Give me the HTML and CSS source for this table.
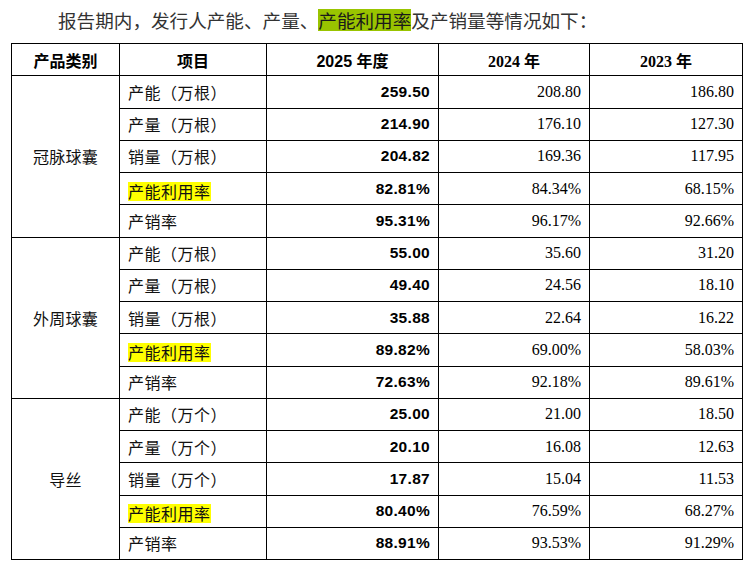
FILE: index.html
```html
<!DOCTYPE html>
<html lang="zh-CN">
<head>
<meta charset="utf-8">
<link rel="stylesheet" href="styles.css">
</head>
<body>
<p class="intro">报告期内，发行人产能、产量、<span class="hl-green">产能利用率</span>及产销量等情况如下：</p>
<table class="data">
  <colgroup>
    <col class="c1"><col class="c2"><col class="c3"><col class="c4"><col class="c5">
  </colgroup>
  <thead>
    <tr>
      <th class="h-sans">产品类别</th>
      <th class="h-sans">项目</th>
      <th class="h-sans">2025 年度</th>
      <th class="h-serif">2024 年</th>
      <th class="h-serif">2023 年</th>
    </tr>
  </thead>
  <tbody>
    <tr><td class="cat" rowspan="5">冠脉球囊</td><td class="item">产能（万根）</td><td class="b">259.50</td><td class="n">208.80</td><td class="n">186.80</td></tr>
    <tr><td class="item">产量（万根）</td><td class="b">214.90</td><td class="n">176.10</td><td class="n">127.30</td></tr>
    <tr><td class="item">销量（万根）</td><td class="b">204.82</td><td class="n">169.36</td><td class="n">117.95</td></tr>
    <tr><td class="item"><span class="hl-yellow">产能利用率</span></td><td class="b">82.81%</td><td class="n">84.34%</td><td class="n">68.15%</td></tr>
    <tr><td class="item">产销率</td><td class="b">95.31%</td><td class="n">96.17%</td><td class="n">92.66%</td></tr>

    <tr><td class="cat" rowspan="5">外周球囊</td><td class="item">产能（万根）</td><td class="b">55.00</td><td class="n">35.60</td><td class="n">31.20</td></tr>
    <tr><td class="item">产量（万根）</td><td class="b">49.40</td><td class="n">24.56</td><td class="n">18.10</td></tr>
    <tr><td class="item">销量（万根）</td><td class="b">35.88</td><td class="n">22.64</td><td class="n">16.22</td></tr>
    <tr><td class="item"><span class="hl-yellow">产能利用率</span></td><td class="b">89.82%</td><td class="n">69.00%</td><td class="n">58.03%</td></tr>
    <tr><td class="item">产销率</td><td class="b">72.63%</td><td class="n">92.18%</td><td class="n">89.61%</td></tr>

    <tr><td class="cat" rowspan="5">导丝</td><td class="item">产能（万个）</td><td class="b">25.00</td><td class="n">21.00</td><td class="n">18.50</td></tr>
    <tr><td class="item">产量（万个）</td><td class="b">20.10</td><td class="n">16.08</td><td class="n">12.63</td></tr>
    <tr><td class="item">销量（万个）</td><td class="b">17.87</td><td class="n">15.04</td><td class="n">11.53</td></tr>
    <tr><td class="item"><span class="hl-yellow">产能利用率</span></td><td class="b">80.40%</td><td class="n">76.59%</td><td class="n">68.27%</td></tr>
    <tr><td class="item">产销率</td><td class="b">88.91%</td><td class="n">93.53%</td><td class="n">91.29%</td></tr>
  </tbody>
</table>
</body>
</html>
```

FILE: styles.css
```css
html, body {
  margin: 0;
  padding: 0;
  background: #ffffff;
}

body {
  font-family: "Noto Sans CJK SC", sans-serif;
  color: #000;
}

.intro {
  margin: 0;
  padding: 9px 0 0 58px;
  height: 34px;
  box-sizing: border-box;
  font-size: 18.6px;
  line-height: 22px;
  color: #333333;
  white-space: nowrap;
}

.hl-green {
  display: inline-block;
  background: #99c400;
  line-height: 22px;
  height: 22px;
  vertical-align: top;
  color: #1a1a1a;
}

.data {
  margin-left: 11px;
  margin-top: 9px;
  border-collapse: collapse;
  table-layout: fixed;
  width: 732px;
}

.c1 { width: 108px; }
.c2 { width: 147px; }
.c3 { width: 172px; }
.c4 { width: 151px; }
.c5 { width: 153px; }

.data th,
.data td {
  border: 1px solid #000;
  height: 32.25px;
  padding: 0 8px;
  box-sizing: border-box;
  vertical-align: middle;
  white-space: nowrap;
}

.data th {
  text-align: center;
  font-weight: bold;
  font-size: 16px;
}

.h-sans {
  font-family: "Liberation Sans", "Noto Sans CJK SC", sans-serif;
}

.h-serif {
  font-family: "Liberation Serif", "Noto Sans CJK SC", serif;
  font-size: 16px;
}

.cat {
  text-align: center;
  font-size: 16px;
  letter-spacing: 0.3px;
  color: #111;
}

.item {
  text-align: left;
  font-size: 16px;
  letter-spacing: 0.5px;
  color: #111;
  padding-left: 10px;
}

.hl-yellow {
  display: inline-block;
  background: #ffff00;
  line-height: 19px;
  height: 19px;
  vertical-align: middle;
}

.b {
  text-align: right;
  font-family: "Liberation Sans", sans-serif;
  font-weight: bold;
  font-size: 15.5px;
  letter-spacing: 0.3px;
  padding-right: 9px;
}

.n {
  text-align: right;
  font-family: "Liberation Serif", serif;
  font-size: 16px;
  padding-right: 8px;
}
```
